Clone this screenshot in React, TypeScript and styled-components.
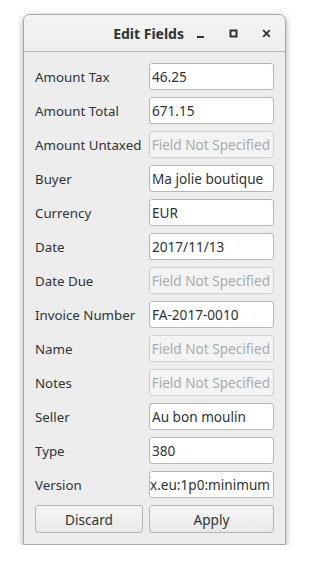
import React from 'react';
import styled, { createGlobalStyle } from 'styled-components';

const GlobalStyle = createGlobalStyle`
  html, body {
    margin: 0;
    padding: 0;
    background: #ffffff;
  }
  body {
    font-family: 'Noto Sans', 'DejaVu Sans', sans-serif;
    color: #2e3436;
  }
`;

type Field = {
  label: string;
  value?: string;
};

const fields: Field[] = [
  { label: 'Amount Tax', value: '46.25' },
  { label: 'Amount Total', value: '671.15' },
  { label: 'Amount Untaxed' },
  { label: 'Buyer', value: 'Ma jolie boutique' },
  { label: 'Currency', value: 'EUR' },
  { label: 'Date', value: '2017/11/13' },
  { label: 'Date Due' },
  { label: 'Invoice Number', value: 'FA-2017-0010' },
  { label: 'Name' },
  { label: 'Notes' },
  { label: 'Seller', value: 'Au bon moulin' },
  { label: 'Type', value: '380' },
  {
    label: 'Version',
    value: 'urn:cen.eu:en16931:2017#compliant#urn:factur-x.eu:1p0:minimum',
  },
];

const App = () => {
  return (
    <Page>
      <GlobalStyle />
      <Window>
        <TitleBar>
          <Title>Edit Fields</Title>
          <Controls>
            <ControlButton title='Minimize'>
              <svg width='9' height='9' viewBox='0 0 9 9'>
                <rect x='1' y='7' width='7' height='2' fill='#2e3436' />
              </svg>
            </ControlButton>
            <ControlButton title='Maximize'>
              <svg width='9' height='9' viewBox='0 0 9 9'>
                <rect
                  x='1.5'
                  y='1.5'
                  width='6'
                  height='6'
                  fill='none'
                  stroke='#2e3436'
                  strokeWidth='2'
                />
              </svg>
            </ControlButton>
            <ControlButton title='Close'>
              <svg width='9' height='9' viewBox='0 0 9 9'>
                <path
                  d='M1.2 1.2 L7.8 7.8 M7.8 1.2 L1.2 7.8'
                  stroke='#2e3436'
                  strokeWidth='1.8'
                />
              </svg>
            </ControlButton>
          </Controls>
        </TitleBar>
        <Content>
          {fields.map(({ label, value }) => (
            <React.Fragment key={label}>
              <Label>{label}</Label>
              <Entry $empty={!value}>
                <EntryText $empty={!value}>
                  {value ?? 'Field Not Specified'}
                </EntryText>
              </Entry>
            </React.Fragment>
          ))}
          <Button>Discard</Button>
          <Button>Apply</Button>
        </Content>
      </Window>
    </Page>
  );
};

export default App;

const Page = styled.div`
  padding: 14px 0 0 23px;
`;

const Window = styled.div`
  width: 263px;
  box-sizing: border-box;
  border: 1px solid #a8a8a8;
  border-radius: 7px 7px 0 0;
  background: #ededed;
  box-shadow: 0 2px 6px rgba(0, 0, 0, 0.35);
`;

const TitleBar = styled.div`
  height: 36px;
  display: flex;
  align-items: center;
  justify-content: flex-end;
  border-bottom: 1px solid #b6b6b3;
  border-radius: 6px 6px 0 0;
  background: linear-gradient(#f5f5f5, #ededed);
`;

const Title = styled.div`
  font-size: 14px;
  font-weight: 700;
  color: #2e3436;
`;

const Controls = styled.div`
  display: flex;
  align-items: center;
  padding-right: 2px;
`;

const ControlButton = styled.div`
  width: 33px;
  height: 24px;
  display: flex;
  align-items: center;
  justify-content: center;
`;

const Content = styled.div`
  display: grid;
  grid-template-columns: 108px 125px;
  column-gap: 6px;
  row-gap: 7px;
  padding: 11px;
`;

const Label = styled.div`
  height: 27px;
  display: flex;
  align-items: center;
  font-size: 13.3px;
  white-space: nowrap;
  color: #2e3436;
`;

const Entry = styled.div<{ $empty: boolean }>`
  height: 27px;
  box-sizing: border-box;
  display: flex;
  align-items: center;
  justify-content: flex-end;
  overflow: hidden;
  padding: 0 3px 0 2px;
  border: 1px solid ${({ $empty }) => ($empty ? '#cfcfcd' : '#b6b6b3')};
  border-radius: 3px;
  background: ${({ $empty }) => ($empty ? '#f4f4f4' : '#ffffff')};
`;

const EntryText = styled.span<{ $empty: boolean }>`
  flex: none;
  min-width: 100%;
  white-space: nowrap;
  font-size: 13.6px;
  color: ${({ $empty }) => ($empty ? '#a9acac' : '#2e3436')};
`;

const Button = styled.div`
  height: 28px;
  box-sizing: border-box;
  display: flex;
  align-items: center;
  justify-content: center;
  font-size: 13.6px;
  color: #2e3436;
  border: 1px solid #b6b6b3;
  border-radius: 3px;
  background: linear-gradient(#f6f6f6, #e8e8e7);
`;
